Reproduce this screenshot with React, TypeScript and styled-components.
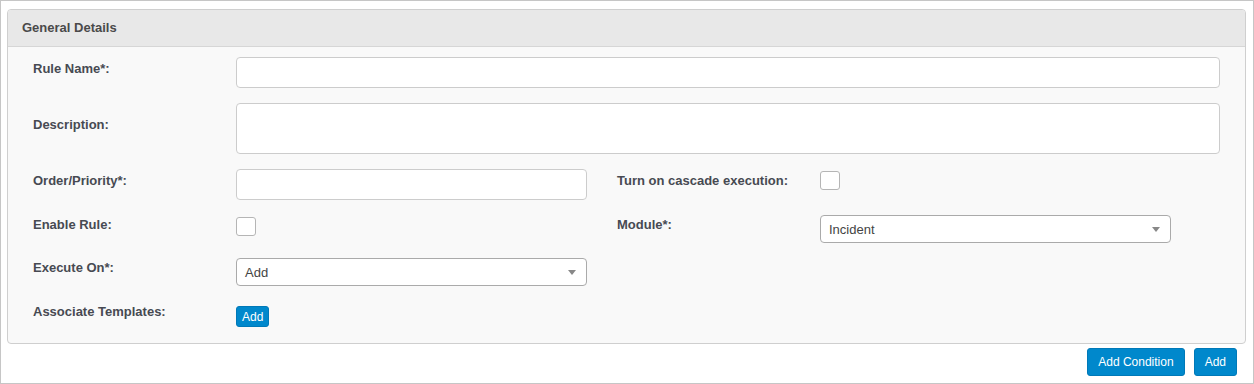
import React from 'react'
import styled, { createGlobalStyle } from 'styled-components'

const GlobalStyle = createGlobalStyle`
  html, body {
    margin: 0;
    padding: 0;
    background: #ffffff;
    font-family: "Liberation Sans", Arial, sans-serif;
  }
`

const Frame = styled.div`
  box-sizing: border-box;
  width: 1254px;
  height: 384px;
  border: 1px solid #c6c6c6;
  padding: 8px 7px 0 6px;
  display: flex;
  flex-direction: column;
`

const Panel = styled.section`
  border: 1px solid #cfcfcf;
  border-radius: 4px;
  background: #f9f9f9;
  overflow: hidden;
`

const PanelHeader = styled.div`
  box-sizing: border-box;
  height: 37px;
  background: #e8e8e8;
  border-bottom: 1px solid #d6d6d6;
  display: flex;
  align-items: center;
  padding: 0 0 1px 14px;
  font-size: 13px;
  font-weight: bold;
  color: #4a4a4a;
`

const Form = styled.div`
  display: grid;
  grid-template-columns: 203px 351px 30px 203px 351px 49px;
  grid-template-rows: 31px 51px 31px 28px 28px 26px;
  row-gap: 15px;
  padding: 10px 25px 16px 25px;
`

const Label = styled.label<{ $col?: number; $shift?: number }>`
  grid-column: ${p => p.$col ?? 1};
  align-self: center;
  padding-bottom: ${p => p.$shift ?? 9}px;
  font-size: 13px;
  line-height: 15px;
  font-weight: bold;
  color: #474a52;
`

const TextInput = styled.div<{ $wide?: boolean }>`
  grid-column: ${p => (p.$wide ? '2 / 7' : '2')};
  box-sizing: border-box;
  height: 100%;
  background: #ffffff;
  border: 1px solid #cccccc;
  border-radius: 4px;
`

const Check = styled.div<{ $col?: number }>`
  grid-column: ${p => p.$col ?? 2};
  align-self: start;
  margin-top: 2px;
  box-sizing: border-box;
  width: 20px;
  height: 19px;
  background: #ffffff;
  border: 1px solid #b5b5b5;
  border-radius: 3px;
`

const Select = styled.div<{ $col?: number }>`
  grid-column: ${p => p.$col ?? 2};
  box-sizing: border-box;
  height: 28px;
  background: #ffffff;
  border: 1px solid #aaaaaa;
  border-radius: 4px;
  display: flex;
  align-items: center;
  justify-content: space-between;
  padding: 0 10px 0 8px;
  font-size: 13px;
  color: #444444;

  &::after {
    content: '';
    border-left: 4px solid transparent;
    border-right: 4px solid transparent;
    border-top: 5px solid #888888;
    margin-top: 1px;
  }
`

const Button = styled.button<{ $small?: boolean }>`
  box-sizing: border-box;
  height: ${p => (p.$small ? '21px' : '28px')};
  padding: 0 ${p => (p.$small ? '5px' : '10px')};
  background: #0088cc;
  border: 1px solid #0079b8;
  border-radius: 3px;
  color: #ffffff;
  font-family: "Liberation Sans", Arial, sans-serif;
  font-size: 12px;
  line-height: 1;
  cursor: pointer;
`

const SmallButtonCell = styled.div`
  grid-column: 2;
  align-self: end;
  display: flex;
`

const Footer = styled.div`
  display: flex;
  justify-content: flex-end;
  gap: 9px;
  padding: 4px 9px 0 0;
`

export default function App() {
  return (
    <>
      <GlobalStyle />
      <Frame>
        <Panel>
          <PanelHeader>General Details</PanelHeader>
          <Form>
            <Label>Rule Name*:</Label>
            <TextInput $wide />

            <Label>Description:</Label>
            <TextInput $wide />

            <Label>Order/Priority*:</Label>
            <TextInput />
            <Label $col={4}>Turn on cascade execution:</Label>
            <Check $col={5} />

            <Label>Enable Rule:</Label>
            <Check />
            <Label $col={4}>Module*:</Label>
            <Select $col={5}>Incident</Select>

            <Label>Execute On*:</Label>
            <Select>Add</Select>

            <Label $shift={6}>Associate Templates:</Label>
            <SmallButtonCell>
              <Button $small>Add</Button>
            </SmallButtonCell>
          </Form>
        </Panel>
        <Footer>
          <Button>Add Condition</Button>
          <Button>Add</Button>
        </Footer>
      </Frame>
    </>
  )
}
